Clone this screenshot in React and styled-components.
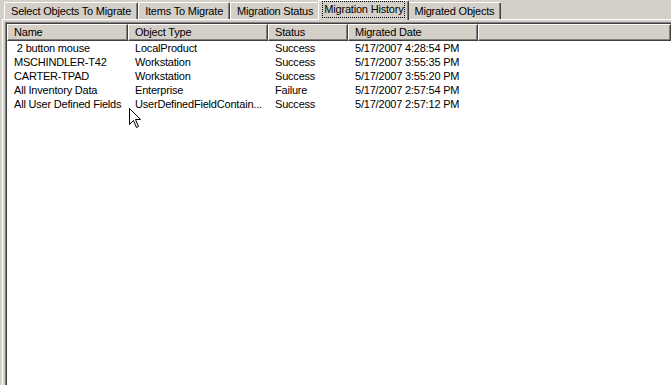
import React from "react"
import styled, { createGlobalStyle } from "styled-components"

const GlobalStyle = createGlobalStyle`
  html, body {
    margin: 0;
    padding: 0;
    background: #d4d0c8;
  }
  body {
    font-family: "Liberation Sans", Arial, sans-serif;
    font-size: 11px;
    letter-spacing: -0.2px;
    color: #000;
  }
`

const face = "#d4d0c8"
const shadow = "#808080"
const dark = "#404040"

const Window = styled.div`
  position: relative;
  width: 671px;
  height: 385px;
  overflow: hidden;
  background: ${face};
  display: flex;
  flex-direction: column;
`

const TabStrip = styled.div`
  display: flex;
  align-items: flex-end;
  height: 19px;
  padding-left: 4px;
`

const Tab = styled.div`
  position: relative;
  box-sizing: border-box;
  height: ${p => (p.$active ? "20px" : "17px")};
  margin: ${p => (p.$active ? "0 -2px -1px -2px" : "0")};
  padding: ${p => (p.$active ? "0 4px 2px" : "1px 5px 0")};
  z-index: ${p => (p.$active ? 1 : 0)};
  background: ${face};
  border-top: 1px solid #fff;
  border-left: 1px solid #fff;
  border-right: 1px solid ${dark};
  border-radius: 2px 2px 0 0;
  box-shadow: inset -1px 0 0 ${shadow};
  display: flex;
  align-items: center;
  white-space: nowrap;
`

const Focus = styled.span`
  outline: ${p => (p.$on ? "1px dotted #000" : "none")};
  outline-offset: 0;
  padding: 1px;
  line-height: 13px;
`

const Panel = styled.div`
  flex: 1;
  display: flex;
  margin-left: 2px;
  padding: 2px 0 0 2px;
  border-top: 1px solid #fff;
  border-left: 1px solid #fff;
`

const ListView = styled.div`
  flex: 1;
  display: flex;
  flex-direction: column;
  background: #fff;
  border-top: 1px solid ${shadow};
  border-left: 1px solid ${shadow};
  box-shadow: inset 1px 1px 0 ${dark};
  padding: 1px 0 0 1px;
`

const HeaderRow = styled.div`
  display: flex;
  height: 17px;
`

const HeaderCell = styled.div`
  box-sizing: border-box;
  flex: ${p => (p.$width ? `0 0 ${p.$width}px` : "1")};
  background: ${face};
  border-top: 1px solid #fff;
  border-left: 1px solid #fff;
  border-right: 1px solid ${dark};
  border-bottom: 1px solid ${dark};
  box-shadow: inset -1px -1px 0 ${shadow};
  padding-left: 6px;
  line-height: 14px;
  white-space: nowrap;
  overflow: hidden;
`

const Row = styled.div`
  display: flex;
  height: 14px;
  line-height: 14px;
`

const Cell = styled.div`
  box-sizing: border-box;
  flex: 0 0 ${p => p.$width}px;
  padding: 0 5px 0 7px;
  white-space: pre;
  overflow: hidden;
  text-overflow: ellipsis;
`

const Cursor = styled.svg`
  position: absolute;
  left: 129px;
  top: 108px;
`

const tabs = [
  "Select Objects To Migrate",
  "Items To Migrate",
  "Migration Status",
  "Migration History",
  "Migrated Objects",
]

const columns = [
  { title: "Name", width: 121 },
  { title: "Object Type", width: 140 },
  { title: "Status", width: 80 },
  { title: "Migrated Date", width: 130 },
]

const rows = [
  [" 2 button mouse", "LocalProduct", "Success", "5/17/2007 4:28:54 PM"],
  ["MSCHINDLER-T42", "Workstation", "Success", "5/17/2007 3:55:35 PM"],
  ["CARTER-TPAD", "Workstation", "Success", "5/17/2007 3:55:20 PM"],
  ["All Inventory Data", "Enterprise", "Failure", "5/17/2007 2:57:54 PM"],
  ["All User Defined Fields", "UserDefinedFieldContain...", "Success", "5/17/2007 2:57:12 PM"],
]

export default function App() {
  return (
    <Window>
      <GlobalStyle />
      <TabStrip>
        {tabs.map((t, i) => (
          <Tab key={t} $active={i === 3}>
            <Focus $on={i === 3}>{t}</Focus>
          </Tab>
        ))}
      </TabStrip>
      <Panel>
        <ListView>
          <HeaderRow>
            {columns.map(c => (
              <HeaderCell key={c.title} $width={c.width}>{c.title}</HeaderCell>
            ))}
            <HeaderCell />
          </HeaderRow>
          {rows.map(r => (
            <Row key={r[0]}>
              {r.map((v, i) => (
                <Cell key={i} $width={columns[i].width}>{v}</Cell>
              ))}
            </Row>
          ))}
        </ListView>
      </Panel>
      {/* mouse pointer */}
      <Cursor width="13" height="21" viewBox="0 0 13 21">
        <path d="M0.5 0.5 L0.5 16.5 L4.5 12.5 L7.5 19.5 L9.5 18.5 L6.5 11.5 L11.5 11.5 Z" fill="#fff" stroke="#000" strokeWidth="1" />
      </Cursor>
    </Window>
  )
}
